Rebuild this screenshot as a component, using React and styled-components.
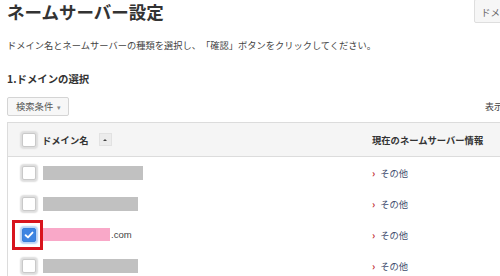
import React from "react";
import styled, { createGlobalStyle } from "styled-components";

const GlobalStyle = createGlobalStyle`
  html, body {
    margin: 0;
    padding: 0;
    background: #fff;
  }
  body {
    font-family: "Noto Sans CJK JP", "Noto Sans", sans-serif;
    color: #333;
    text-spacing-trim: space-all;
  }
`;

const rows = [
  { bar: 100, color: "#c1c1c1" },
  { bar: 95, color: "#c1c1c1" },
  { bar: 67, color: "#f9a8c8", suffix: ".com", checked: true },
  { bar: 95, color: "#c1c1c1" },
];

export default function App() {
  return (
    <Viewport>
      <GlobalStyle />
      <Page>
        <TopBar>
          <Title>ネームサーバー設定</Title>
          <GhostButton>ドメイン一覧</GhostButton>
        </TopBar>
        <Lead>
          ドメイン名とネームサーバーの種類を選択し、「確認」ボタンをクリックしてください。
        </Lead>
        <Heading>1.ドメインの選択</Heading>
        <Toolbar>
          <FilterButton>
            検索条件 <Caret>▾</Caret>
          </FilterButton>
          <ShowCount>表示件数</ShowCount>
        </Toolbar>
        <Table>
          <HeadRow>
            <Cell>
              <Check />
              <HeadText>ドメイン名</HeadText>
              <SortButton>
                <Tri />
              </SortButton>
            </Cell>
            <Cell>
              <HeadText>現在のネームサーバー情報</HeadText>
            </Cell>
          </HeadRow>
          {rows.map((r, i) => (
            <Row key={i}>
              <Cell $gap={7}>
                <CheckWrap>
                  <Check $checked={r.checked}>
                    {r.checked && (
                      <svg width="10" height="10" viewBox="0 0 10 10">
                        <path
                          d="M1.6 5.2 L4 7.4 L8.5 2.6"
                          fill="none"
                          stroke="#fff"
                          strokeWidth="1.9"
                          strokeLinecap="round"
                          strokeLinejoin="round"
                        />
                      </svg>
                    )}
                  </Check>
                  {r.checked && <Highlight />}
                </CheckWrap>
                <Name>
                  <Mask $w={r.bar} $color={r.color} $pink={!!r.suffix} />
                  {r.suffix && <Suffix>{r.suffix}</Suffix>}
                </Name>
              </Cell>
              <Cell>
                <Chevron>›</Chevron>
                <InfoLink>その他</InfoLink>
              </Cell>
            </Row>
          ))}
        </Table>
      </Page>
    </Viewport>
  );
}

const Viewport = styled.div`
  width: 500px;
  height: 276px;
  overflow: hidden;
`;

const Page = styled.div`
  width: 560px;
  padding-left: 7px;
  box-sizing: border-box;
`;

const TopBar = styled.div`
  display: flex;
  justify-content: space-between;
  align-items: flex-start;
  height: 24px;
`;

const Title = styled.h1`
  margin: 0;
  font-size: 17.5px;
  line-height: 24px;
  font-weight: 700;
  color: #333;
  white-space: nowrap;
`;

const GhostButton = styled.div`
  width: 86px;
  height: 24px;
  box-sizing: border-box;
  margin-top: -1px;
  padding-left: 6px;
  background: #f6f6f6;
  border: 1px solid #dedede;
  border-radius: 2px;
  font-size: 9.5px;
  line-height: 24px;
  color: #666;
  white-space: nowrap;
`;

const Lead = styled.p`
  margin: 13.5px 0 0;
  font-size: 9.25px;
  line-height: 14px;
  color: #444;
  white-space: nowrap;
`;

const Heading = styled.h2`
  margin: 20px 0 0;
  font-size: 10.4px;
  line-height: 14px;
  font-weight: 700;
  color: #333;
`;

const Toolbar = styled.div`
  display: flex;
  justify-content: space-between;
  align-items: center;
  margin-top: 11.6px;
  height: 19px;
`;

const FilterButton = styled.div`
  width: 62px;
  height: 19px;
  box-sizing: border-box;
  padding-left: 8px;
  background: #f7f7f7;
  border: 1px solid #d4d4d4;
  border-radius: 2px;
  font-size: 9.3px;
  line-height: 17px;
  color: #555;
  white-space: nowrap;
`;

const Caret = styled.span`
  font-size: 7px;
  color: #888;
  margin-left: 2px;
`;

const ShowCount = styled.div`
  width: 75px;
  font-size: 9px;
  line-height: 14px;
  color: #444;
  white-space: nowrap;
`;

const Table = styled.div`
  margin-top: 6px;
  border-top: 1px solid #dcdcdc;
  border-left: 1px solid #dcdcdc;
`;

const HeadRow = styled.div`
  display: grid;
  grid-template-columns: 364px 1fr;
  height: 33px;
  background: #f5f5f5;
  border-bottom: 1px solid #dcdcdc;
`;

const Row = styled.div`
  display: grid;
  grid-template-columns: 364px 1fr;
  height: 31px;
`;

const Cell = styled.div`
  display: flex;
  align-items: center;
  gap: ${(p) => p.$gap ?? 6}px;
  &:first-child {
    padding-left: 14px;
  }
`;

const HeadText = styled.span`
  font-size: 9.3px;
  font-weight: 700;
  color: #333;
  white-space: nowrap;
`;

const SortButton = styled.span`
  display: inline-flex;
  align-items: center;
  justify-content: center;
  width: 13px;
  height: 13px;
  margin-left: 4px;
  background: #ececec;
  border: 1px solid #e2e2e2;
  box-sizing: border-box;
`;

const Tri = styled.span`
  width: 0;
  height: 0;
  border-left: 2px solid transparent;
  border-right: 2px solid transparent;
  border-bottom: 2px solid #444;
`;

const CheckWrap = styled.span`
  position: relative;
  display: inline-flex;
`;

const Check = styled.span`
  display: inline-flex;
  align-items: center;
  justify-content: center;
  width: 14px;
  height: 14px;
  box-sizing: border-box;
  border-radius: 2px;
  background: ${(p) => (p.$checked ? "#3d84e2" : "#fff")};
  border: 1px solid ${(p) => (p.$checked ? "#3a7fd8" : "#c9c9c9")};
  box-shadow: 0 0 1.5px 2px ${(p) => (p.$checked ? "#b9d2f4" : "#dedede")};
`;

const Highlight = styled.span`
  position: absolute;
  left: -10px;
  top: -8px;
  width: 31px;
  height: 30px;
  box-sizing: border-box;
  border: 3px solid #d8141d;
`;

const Name = styled.span`
  display: inline-flex;
  align-items: center;
`;

const Mask = styled.span`
  display: inline-block;
  width: ${(p) => p.$w}px;
  height: ${(p) => (p.$pink ? 13 : 14)}px;
  background: ${(p) => p.$color};
`;

const Suffix = styled.span`
  margin-left: 1px;
  font-family: "Liberation Sans", Arial, sans-serif;
  font-size: 9.5px;
  color: #444;
`;

const Chevron = styled.span`
  font-size: 10px;
  color: #c0282d;
  font-weight: 700;
  margin-right: -1px;
`;

const InfoLink = styled.span`
  font-size: 9.3px;
  color: #3e4d6e;
`;
